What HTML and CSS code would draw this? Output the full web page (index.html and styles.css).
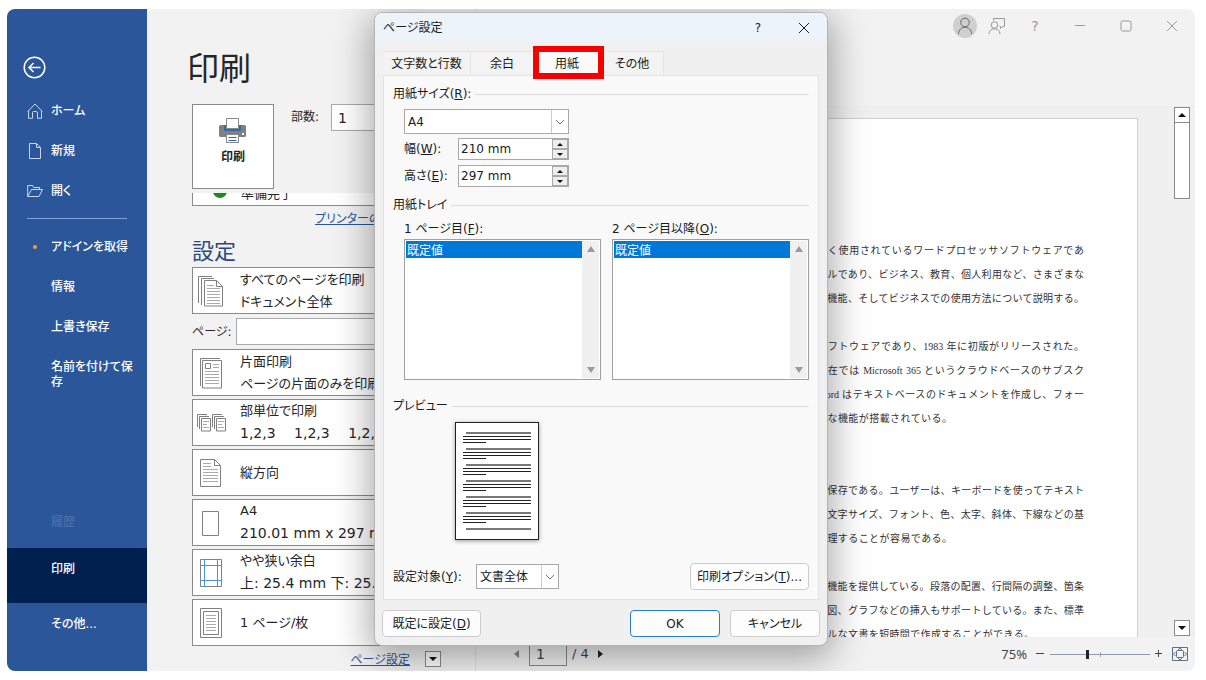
FILE: index.html
```html
<!DOCTYPE html>
<html lang="ja">
<head>
<meta charset="utf-8">
<title>ページ設定</title>
<link rel="stylesheet" href="styles.css">
</head>
<body>
<div class="window">
  <nav class="sidebar">
    <button class="back" aria-label="戻る"><svg width="23" height="23" viewBox="0 0 23 23"><circle cx="11.500" cy="11.500" r="10.300"/><path d="M17.500 11.500H6M10.500 7L6 11.500L10.500 16"/></svg></button>
    <a class="nav" href="#"><svg width="16" height="16" viewBox="0 0 16 16"><path d="M.7 8.500L8 1L15.300 8.500M1.500 7.700V15.300H5.500V9.500Q5.500 8.500 6.500 8.500H9Q10.500 8.500 10.500 10V15.300H14.500V7.700"/></svg>ホーム</a>
    <a class="nav" href="#"><svg width="16" height="16" viewBox="0 0 16 16"><path d="M2.500.5H9.500L13.500 4.500V15.500H2.500ZM9.500.5V4.500H13.500"/></svg>新規</a>
    <a class="nav" href="#"><svg width="16" height="16" viewBox="0 0 16 16"><path d="M.7 13.500V2.500H5.500L6.700 4.500H12.500V6.500M.7 13.500L4.500 6.500H15.500L12 13.500Z"/></svg>開く</a>
    <hr>
    <a class="nav" href="#"><i class="dot"></i>アドインを取得</a>
    <a class="nav plain" href="#">情報</a>
    <a class="nav plain" href="#">上書き保存</a>
    <a class="nav plain two" href="#">名前を付けて保存</a>
    <span class="nav plain faded">履歴</span>
    <a class="nav plain current" href="#">印刷</a>
    <a class="nav plain last" href="#">その他...</a>
  </nav>

  <section class="settings">
    <h1>印刷</h1>
    <div class="print-row">
      <button class="print-btn">
        <svg width="28" height="26" viewBox="0 0 28 26" stroke="none"><rect x="0" y="7" width="27" height="12" rx="1.500" fill="#808080" stroke="none"/><path d="M5 7H22V13H5Z" fill="#2f6da8" stroke="none"/><path d="M7.500.5H19.500V10.500H7.500Z" fill="#fff" stroke="#888"/><path d="M5 11H22V13H5Z" fill="#2f6da8" stroke="none"/><rect x="7.500" y="16.500" width="12" height="8" fill="#fff" stroke="#888"/><path d="M9.500 19.500H17.500M9.500 22.500H17.500" stroke="#2f6da8"/><rect x="23" y="15" width="2" height="2" fill="#fff" stroke="none"/></svg>
        印刷
      </button>
      <label for="copies">部数:</label><input id="copies" value="1">
    </div>
    <div class="scroll">
      <div class="list">
        <div class="printer"><i></i><span>準備完了</span></div>
        <a class="link" href="#">プリンターのプロパティ</a>
        <h2>設定</h2>
        <button class="opt"><svg width="28" height="32" viewBox="0 0 28 32"><path d="M1.500 28V1.500H15M4.500 30V3.500H17"/><path d="M7.500 5.500H19.500L25.500 11.500V31H7.500ZM19.500 5.500V11.500H25.500"/><path class="thin" d="M10 10.500H17M10 13.500H23M10 16.500H23M10 19.500H23M10 22.500H23M10 25.500H23M10 28.500H23"/></svg><span>すべてのページを印刷<br>ドキュメント全体</span></button>
        <div class="pages"><label for="pages">ページ:</label><input id="pages"></div>
        <button class="opt"><svg width="28" height="32" viewBox="0 0 28 32"><path d="M3.500 29V1.500H23M5.500 31H24.500V3.500H5.500Z"/><path d="M8.500 6.500H13.500V11.500H8.500Z"/><path class="thin" d="M16 7.500H22M16 10.500H22M8 14.500H22M8 17.500H22M8 20.500H22M8 23.500H22M8 26.500H22"/></svg><span>片面印刷<br>ページの片面のみを印刷</span></button>
        <button class="opt"><svg class="wide" width="30" height="20" viewBox="0 0 30 20"><path d="M.5 14V1.500H10M2.500 16V3.500H12M4.500 5.500H13.500V18H4.500ZM15.500 14V1.500H25M17.500 16V3.500H27M19.500 5.500H28.500V18H19.500Z"/><path class="thin" d="M6 8.500H12M6 11.500H10M6 14.500H12M21 8.500H27M21 11.500H25M21 14.500H27"/></svg><span>部単位で印刷<br><b class="num">1,2,3&emsp; 1,2,3&emsp; 1,2,3</b></span></button>
        <button class="opt"><svg width="28" height="32" viewBox="0 0 28 32"><path d="M3.500 2.500H17.500L23.500 8.500V29.500H3.500ZM17.500 2.500V8.500H23.500"/><path class="thin" d="M6 6.500H14M6 9.500H14M6 12.500H21M6 15.500H21M6 18.500H21M6 21.500H21M6 24.500H21"/></svg><span>縦方向</span></button>
        <button class="opt"><svg width="28" height="32" viewBox="0 0 28 32"><path d="M5.500 4.500H21.500V28.500H5.500Z"/></svg><span>A4<br><b class="num">210.01 mm x 297 mm</b></span></button>
        <button class="opt"><svg width="28" height="32" viewBox="0 0 28 32"><path d="M3.500 2.500H24.500V29.500H3.500Z"/><path class="blue" d="M7.500 2V30M20.500 2V30M3 8.500H25M3 23.500H25"/></svg><span>やや狭い余白<br><b class="num">上: 25.4 mm 下: 25.4 mm</b></span></button>
        <button class="opt"><svg width="28" height="32" viewBox="0 0 28 32"><path d="M3.500 1.500H24.500V30.500H3.500ZM6.500 4.500H21.500V27.500H6.500Z"/><path class="thin" d="M9 8.500H19M9 11.500H19M9 14.500H19M9 17.500H19M9 20.500H19M9 23.500H19"/></svg><span>1 ページ/枚</span></button>
        <a class="link setup" href="#">ページ設定</a>
      </div>
      <div class="bar left-bar"><button aria-label="下へ"><i class="tri down"></i></button></div>
    </div>
  </section>

  <section class="preview">
    <header class="caption">
      <button class="avatar" aria-label="アカウント"><svg width="16" height="18" viewBox="0 0 16 18"><circle cx="8" cy="5.500" r="4.300"/><path d="M1.500 17C1.500 8 14.500 8 14.500 17"/></svg></button>
      <button aria-label="フィードバック"><svg width="18" height="18" viewBox="0 0 18 18"><circle cx="6.500" cy="8" r="3.300"/><path d="M1 17C1 10 12 10 12 17M5.500 3.500V1.500H16.500V9.500H14.500L12.500 11.500V9.500H11.500"/></svg></button>
      <button aria-label="ヘルプ">?</button>
      <button aria-label="最小化"><svg width="12" height="12" viewBox="0 0 12 12"><path d="M1 5.500H11"/></svg></button>
      <button aria-label="最大化"><svg width="12" height="12" viewBox="0 0 12 12"><rect x="1" y="1" width="10" height="10" rx="1.500"/></svg></button>
      <button aria-label="閉じる"><svg width="12" height="12" viewBox="0 0 12 12"><path d="M1 1L11 11M11 1L1 11"/></svg></button>
    </header>
    <div class="canvas">
      <article class="sheet">
        <p>広く使用されているワードプロセッサソフトウェアであ<br>ールであり、ビジネス、教育、個人利用など、さまざまな<br>な機能、そしてビジネスでの使用方法について説明する。</p>
        <p>ソフトウェアであり、1983 年に初版がリリースされた。<br>現在では Microsoft 365 というクラウドベースのサブスク<br>Word はテキストベースのドキュメントを作成し、フォー</p>
        <p class="short mid">々な機能が搭載されている。</p>
        <p>と保存である。ユーザーは、キーボードを使ってテキスト<br>、文字サイズ、フォント、色、太字、斜体、下線などの基</p>
        <p class="short">管理することが容易である。</p>
        <p class="tail">る機能を提供している。段落の配置、行間隔の調整、箇条<br>や図、グラフなどの挿入もサポートしている。また、標準</p>
        <p class="longer">ナルな文書を短時間で作成することができる。</p>
      </article>
      <div class="bar right-bar"><button aria-label="上へ"><i class="tri up"></i></button><div class="thumb"></div><button class="end" aria-label="下へ"><i class="tri down"></i></button></div>
    </div>
    <footer class="status">
      <button aria-label="前のページ"><i class="tri prev"></i></button>
      <input class="page-no" aria-label="ページ番号" value="1"><span>/ 4</span>
      <button aria-label="次のページ"><i class="tri next"></i></button>
      <span class="percent">75%</span>
      <button aria-label="縮小"><svg width="10" height="10" viewBox="0 0 10 10"><path d="M1 4.500H9"/></svg></button>
      <input class="zoom" type="range" min="0" max="100" value="37" aria-label="ズーム">
      <button aria-label="拡大"><svg width="10" height="10" viewBox="0 0 10 10"><path d="M1 4.500H8M4.500 1V8"/></svg></button>
      <button class="fit" aria-label="ページに合わせる"><svg width="16" height="14" viewBox="0 0 16 14"><path d="M.5.5H15.500V13.500H.5Z"/><rect x="4.500" y="3.500" width="7" height="7" rx="1"/><path d="M6 3L8 1L10 3M6 11L8 13L10 11M3.500 5L1.500 7L3.500 9M12.500 5L14.500 7L12.500 9"/></svg></button>
    </footer>
  </section>

  <div class="dialog" role="dialog" aria-labelledby="dlg-title">
    <header class="titlebar"><span id="dlg-title">ページ設定</span><button aria-label="ヘルプ">?</button><button aria-label="閉じる"><svg width="12" height="12" viewBox="0 0 12 12"><path d="M1 1L11 11M11 1L1 11"/></svg></button></header>
    <div class="tabs" role="tablist">
      <button role="tab" class="wide-tab">文字数と行数</button><button role="tab">余白</button><button role="tab" class="active" aria-selected="true">用紙<i class="frame"></i></button><button role="tab">その他</button>
    </div>
    <div class="panel">
      <div class="legend"><label for="size">用紙サイズ(<u>R</u>):</label></div>
      <div class="fields">
        <div class="combo"><select id="size"><option>A4</option></select><svg width="10" height="6" viewBox="0 0 10 6"><path d="M1 1L5 5L9 1"/></svg></div>
        <div class="field"><label for="w">幅(<u>W</u>):</label><div class="spin"><input id="w" value="210 mm"><span><button aria-label="増やす"><i class="tri up"></i></button><button aria-label="減らす"><i class="tri down"></i></button></span></div></div>
        <div class="field"><label for="h">高さ(<u>E</u>):</label><div class="spin"><input id="h" value="297 mm"><span><button aria-label="増やす"><i class="tri up"></i></button><button aria-label="減らす"><i class="tri down"></i></button></span></div></div>
      </div>
      <div class="legend">用紙トレイ</div>
      <div class="trays">
        <div><label for="t1">1 ページ目(<u>F</u>):</label><div class="listbox"><select id="t1" size="4"><option selected>既定値</option></select><span><i class="tri up"></i><i class="tri down"></i></span></div></div>
        <div><label for="t2">2 ページ目以降(<u>O</u>):</label><div class="listbox"><select id="t2" size="4"><option selected>既定値</option></select><span><i class="tri up"></i><i class="tri down"></i></span></div></div>
      </div>
      <div class="legend">プレビュー</div>
      <svg class="mini" width="84" height="118" viewBox="0 0 84 118">
        <defs><g id="para"><path d="M11 11H76" stroke="#777" stroke-width="2"/><path d="M8 14.500H76M8 17.500H76M8 20.500H31"/></g></defs>
        <rect x=".5" y=".5" width="83" height="117" fill="#fff"/>
        <use href="#para"/><use href="#para" y="16"/><use href="#para" y="32"/><use href="#para" y="48"/><use href="#para" y="64"/><use href="#para" y="80"/>
        <path d="M11 107H76" stroke="#777" stroke-width="2"/>
      </svg>
      <div class="apply"><label for="target">設定対象(<u>Y</u>):</label><div class="combo small"><select id="target"><option>文書全体</option></select><svg width="10" height="6" viewBox="0 0 10 6"><path d="M1 1L5 5L9 1"/></svg></div><button class="btn options">印刷オプション(<u>T</u>)...</button></div>
    </div>
    <footer class="actions"><button class="btn default">既定に設定(<u>D</u>)</button><button class="btn ok">OK</button><button class="btn">キャンセル</button></footer>
  </div>
</div>
</body>
</html>
```
FILE: styles.css
```css
* { box-sizing: border-box; }
body {
  margin: 0;
  padding: 9px 11px 9px 7px;
  background: #fff;
  color: #262626;
  font: 12px/16px "DejaVu Sans", "Noto Sans CJK JP", sans-serif;
  font-feature-settings: "palt";
}
button, input, select {
  font: inherit;
  font-feature-settings: inherit;
  color: inherit;
  margin: 0;
  padding: 0;
  border: 0;
  border-radius: 0;
  background: none;
  outline: none;
  appearance: none;
}
input { min-width: 0; }
svg { flex: none; fill: none; stroke: currentColor; }
h1, h2, p { margin: 0; font-weight: 400; }
.window {
  position: relative;
  display: flex;
  height: calc(100vh - 18px);
  min-height: 640px;
  overflow: hidden;
  border-radius: 8px;
  background: #f2f2f2;
}
.tri {
  display: block;
  border: 4px solid transparent;
}
.tri.up { border-top: 0; border-bottom-color: #111; }
.tri.down { border-bottom: 0; border-top-color: #111; }
.tri.prev { border-left: 0; border-right: 5px solid #888; }
.tri.next { border-right: 0; border-left: 5px solid #222; }

/* Navigation */
.sidebar {
  display: flex;
  flex: none;
  flex-direction: column;
  width: 140px;
  background: #2b579a;
  color: #fff;
  font-weight: 500;
}
.back { width: 23px; height: 23px; margin: 47px 0 12px 16px; }
.back svg { display: block; stroke-width: 1.5; }
.nav {
  display: flex;
  flex: none;
  align-items: center;
  gap: 8px;
  height: 40px;
  padding: 0 10px 0 20px;
  color: inherit;
  text-decoration: none;
}
.nav svg { stroke: #c9d6ea; }
.plain { padding-left: 44px; }
.sidebar hr {
  width: 100px;
  height: 1px;
  margin: 7px 20px 8px;
  border: 0;
  background: #7fa3da;
}
.dot {
  width: 4px;
  height: 4px;
  margin: 0 6px;
  border-radius: 2px;
  background: #f0a030;
}
.two { height: 56px; padding-right: 16px; padding-right: 14px; line-height: 15px; word-break: break-all; }
.faded { margin-top: auto; height: 52px; color: #4a70aa; }
.current { height: 55px; padding-bottom: 14px; background: #002050; }
.last { height: 68px; padding-bottom: 26px; }

/* Print settings */
.settings {
  display: flex;
  flex: none;
  flex-direction: column;
  width: 329px;
  padding-left: 45px;
  border-right: 1px solid #e2e2e2;
}
h1 { margin: 36px 0 0 -5px; font-size: 32px; line-height: 48px; }
.print-row { display: flex; margin-top: 11px; }
.print-btn {
  display: flex;
  flex-direction: column;
  align-items: center;
  gap: 5px;
  width: 82px;
  height: 85px;
  margin-right: 17px;
  padding-top: 13px;
  border: 1px solid #8a8a8a;
  background: #fff;
  font-weight: 700;
}
.print-row label { width: 40px; padding-top: 5px; }
.print-row input {
  width: 60px;
  height: 27px;
  padding-left: 6px;
  border: 1px solid #aaa;
  background: #fff;
  font-size: 14px;
}
.scroll {
  display: flex;
  flex: 1;
  gap: 12px;
  min-height: 0;
  margin-top: 4px;
  font-size: 13px;
  line-height: 22px;
}
.list { display: flex; flex-direction: column; width: 221px; }
.printer {
  display: flex;
  flex: none;
  align-items: flex-end;
  height: 13px;
  padding-left: 20px;
  overflow: hidden;
  border: 1px solid #8a8a8a;
  border-top: 0;
  background: #fff;
}
.printer i { width: 14px; height: 14px; margin: 0 14px 7px 0; border-radius: 7px; background: #1c8a1c; }
.link { align-self: flex-start; margin: 5px 0 0 123px; color: #2b579a; font-size: 12px; line-height: 16px; white-space: nowrap; }
h2 { margin: 10px 0 0; color: #2b4a7c; font-size: 22px; line-height: 30px; }
.opt {
  display: flex;
  flex: none;
  align-items: center;
  gap: 15px;
  height: 47px;
  margin-bottom: 3px;
  padding-left: 4px;
  overflow: hidden;
  border: 1px solid #8a8a8a;
  background: #fff;
  text-align: left;
  white-space: nowrap;
}
.opt svg { stroke: #808080; }
.opt .wide { margin-right: -2px; }
.opt .thin { stroke: #aaa; }
.opt .blue { stroke: #4a94d8; }
.num { font-size: 14px; font-weight: 400; }
.pages { display: flex; align-items: center; height: 27px; margin: 1px 0 4px; }
.pages label { width: 44px; font-size: 12px; }
.pages input { flex: 1; height: 27px; border: 1px solid #aaa; background: #fff; }
.link.setup { align-self: flex-end; margin: 3px 3px 0 0; }
.bar { width: 16px; }
.bar button {
  display: flex;
  align-items: center;
  justify-content: center;
  width: 16px;
  height: 16px;
  border: 1px solid #8a8a8a;
  background: #fff;
}
.left-bar { display: flex; flex-direction: column; justify-content: flex-end; padding-bottom: 4px; }

/* Print preview */
.preview { display: flex; flex: 1; flex-direction: column; min-width: 0; }
.caption {
  display: flex;
  justify-content: flex-end;
  height: 97px;
  padding-top: 5px;
  color: #999;
}
.caption button {
  display: flex;
  align-items: center;
  justify-content: center;
  width: 46px;
  height: 24px;
  font-size: 14px;
}
.caption .avatar { width: 24px; margin-right: 12px; border-radius: 12px; background: #cfcfcf; color: #666; }
.caption button:nth-child(2) { width: 16px; margin-right: 8px; }
.caption button:nth-child(3) { width: 44px; }
.canvas {
  display: flex;
  flex: 1;
  justify-content: flex-end;
  min-height: 0;
  border-top: 1px solid #ececec;
  background: #f0f0f0;
}
.sheet {
  flex: 1;
  margin: 11px 36px 0 52px;
  padding: 120px 53px 0 288px;
  overflow: hidden;
  border: 1px solid #d0d0d0;
  border-bottom: 0;
  background: #fff;
  color: #333;
  font: 10px/24px "Liberation Serif", "Noto Sans CJK JP", serif;
  font-feature-settings: normal;
  text-align: justify;
  text-align-last: justify;
  white-space: nowrap;
}
.sheet p:first-child { margin-bottom: 24px; }
.short { margin-right: 132px; }
.longer { margin-right: 50px; }
.mid { margin-bottom: 48px; }
.tail { margin-top: 24px; }
.right-bar { display: flex; flex-direction: column; margin-right: 5px; }
.thumb { height: 76px; border: 1px solid #8a8a8a; border-top: 0; background: #fff; }
.right-bar .end { margin-top: auto; margin-bottom: 1px; }
.status {
  display: flex;
  align-items: center;
  height: 34px;
  padding: 0 7px 0 38px;
  color: #444;
}
.status button { display: flex; align-items: center; }
.page-no { width: 38px; height: 24px; margin: 0 5px 0 10px; padding-left: 6px; border: 1px solid #8a8a8a; background: #f2f2f2; font-size: 14px; }
.page-no + span { margin-right: 9px; font-size: 13px; }
.percent { margin: 0 8px 0 auto; font: 13px/16px "Noto Sans", sans-serif; }
.zoom {
  width: 100px;
  height: 16px;
  margin: 0 4px 0 5px;
  background: linear-gradient(#8c9bb0, #8c9bb0) center / 100% 1px no-repeat, linear-gradient(#aaa, #aaa) center / 1px 5px no-repeat;
}
.zoom::-webkit-slider-thumb { width: 3px; height: 9px; appearance: none; background: #222; }
.fit { margin-left: 8px; color: #5b7081; }

/* Page setup dialog */
.dialog {
  position: absolute;
  top: 3px;
  left: 50%;
  width: 454px;
  margin-left: -227px;
  overflow: hidden;
  border: 1px solid #b4b4b4;
  border-radius: 8px;
  background: #f0f0f0;
  box-shadow: 0 8px 36px 4px rgba(0, 0, 0, .35);
  color: #1a1a1a;
}
.titlebar {
  display: flex;
  align-items: center;
  height: 29px;
  padding-left: 8px;
  background: #edf3fa;
}
.titlebar span { flex: 1; }
.titlebar button { display: flex; align-items: center; justify-content: center; width: 46px; height: 29px; }
.tabs { display: flex; height: 24px; margin: 9px 8px 0; }
.tabs button { width: 63px; border: 1px solid #e6e6e6; border-bottom: 0; border-left: 0; background: #f3f3f3; }
.tabs .wide-tab { width: 88px; }
.tabs .active { position: relative; width: 67px; background: #fafafa; }
.frame { position: absolute; inset: -6px -4px -4px -1px; border: 6px solid #f60000; }
.panel {
  margin: 0 8px;
  padding: 10px 9px 9px;
  border: 1px solid #e3e3e3;
  background: #f9f9f9;
}
.legend { display: flex; align-items: center; gap: 4px; }
.legend::after { flex: 1; height: 1px; background: #dcdcdc; content: ""; }
.fields { padding: 7px 0 5px 11px; }
.combo, .spin {
  display: flex;
  align-items: center;
  border: 1px solid #a8a8a8;
  background: #fff;
}
.combo { position: relative; width: 165px; height: 25px; margin-bottom: 4px; }
.combo select { flex: 1; height: 23px; padding-left: 3px; }
.combo svg { position: absolute; right: 3px; color: #777; pointer-events: none; }
.combo::after { position: absolute; right: 16px; width: 1px; height: 23px; background: #ccc; content: ""; }
.field { display: flex; align-items: center; margin-bottom: 5px; }
.field label { width: 54px; }
.spin { width: 111px; height: 22px; }
.spin input { flex: 1; height: 20px; padding-left: 2px; }
.spin span { display: grid; width: 16px; }
.spin button { display: grid; place-items: center; height: 10px; border: 1px solid #aaa; background: #eee; }
.spin .up { border-width: 0 3px 3px; }
.spin .down { border-width: 3px 3px 0; }
.trays { display: grid; grid-template-columns: 1fr 1fr; gap: 11px; padding: 8px 0 18px 11px; }
.trays label { display: block; margin-bottom: 2px; }
.listbox { display: flex; height: 141px; padding: 1px; border: 1px solid #a0a0a0; background: #fff; }
.listbox select { flex: 1; min-width: 0; overflow: hidden; }
.listbox option { min-height: 15px; padding: 0 1px; line-height: 15px; }
.listbox option:checked { background: #0078d7 linear-gradient(#0078d7, #0078d7); color: #fff; -webkit-text-fill-color: #fff; }
.listbox span { display: flex; flex-direction: column; align-items: center; justify-content: space-between; width: 17px; padding: 5px 0; background: #f0f0f0; }
.listbox .up { border-bottom-width: 6px; border-bottom-color: #9a9a9a; }
.listbox .down { border-top-width: 6px; border-top-color: #9a9a9a; }
.mini { display: block; margin: 8px 0 23px 62px; stroke: #222; box-shadow: 0 1px 4px rgba(0, 0, 0, .4); }
.apply { display: flex; align-items: center; }
.apply label { width: 83px; }
.combo.small { width: 83px; margin: 0; }
.btn { height: 27px; border: 1px solid #ccc; border-radius: 4px; background: #fdfdfd; }
.options { width: 119px; margin-left: auto; }
.actions { display: flex; gap: 10px; padding: 10px 7px 8px; }
.actions .btn { width: 90px; }
.actions .default { width: 99px; margin-right: auto; }
.actions .ok { border-color: #2a7fcb; }
```
